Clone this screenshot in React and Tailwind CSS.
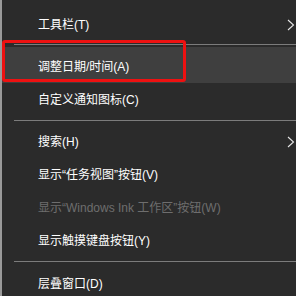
import React from "react";

const Chevron = () => (
  <svg width="8" height="12" viewBox="0 0 8 12" className="absolute right-[1px] top-1/2 -translate-y-1/2">
    <polyline points="1,1 6.5,6 1,11" fill="none" stroke="#e6e6e6" strokeWidth="1.1" />
  </svg>
);

const Item = ({ label, disabled, sub, className = "" }) => (
  <div className={`relative flex items-center h-[33px] pl-[36px] text-[12px] ${disabled ? "text-[#6e6e6e]" : "text-white"} ${className}`}>
    <span>{label}</span>
    {sub && <Chevron />}
  </div>
);

const Sep = ({ className = "" }) => (
  <div className={`flex flex-col ${className}`}>
    <div className="ml-[12px] h-px bg-[#7c7c7c]" />
  </div>
);

export default function App() {
  return (
    <div
      className="relative w-[296px] h-[296px] overflow-hidden bg-[#2b2b2b] border-l-2 border-[#9a9a9a]"
      style={{ fontFamily: '"Liberation Sans", "Noto Sans CJK SC", sans-serif' }}
    >
      <div className="pt-[8px]">
        <Item label="工具栏(T)" sub />
        <Sep className="h-[6px] pt-[3px]" />
        <div className="relative flex items-center h-[36px] pt-[3px] pl-[36px] text-[12px] text-white bg-[#3f3f3f]">
          <span>调整日期/时间(A)</span>
        </div>
        <Item label="自定义通知图标(C)" />
        <Sep className="h-[9px] pt-[4px]" />
        <Item label="搜索(H)" sub />
        <Item label="显示“任务视图”按钮(V)" />
        <Item label="显示“Windows Ink 工作区”按钮(W)" disabled />
        <Item label="显示触摸键盘按钮(Y)" />
        <Sep className="h-[9px] pt-[4px]" />
        <Item label="层叠窗口(D)" className="pt-[2px]" />
      </div>
      <div className="absolute left-0 top-[40px] w-[184px] h-[42px] border-[3px] border-[#ee1111] rounded-[3px]" />
    </div>
  );
}
